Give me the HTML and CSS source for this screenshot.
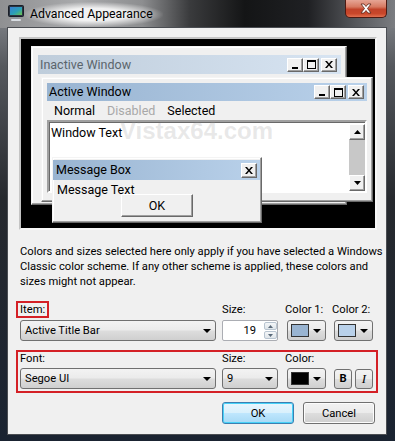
FILE: index.html
```html
<!DOCTYPE html>
<html lang="en">
<head>
    <meta charset="UTF-8">
    <title>Advanced Appearance</title>
    <link rel="stylesheet" href="styles.css">
</head>
<body>
<div class="dlg">
    <div class="titlebar">
        <svg class="appicon" width="16" height="16" viewBox="0 0 16 16">
            <defs>
                <linearGradient id="scr" x1="0" y1="0" x2="1" y2="1">
                    <stop offset="0" stop-color="#3a7fd0"/>
                    <stop offset="0.55" stop-color="#2aa0b8"/>
                    <stop offset="1" stop-color="#6cc24a"/>
                </linearGradient>
            </defs>
            <rect x="0.5" y="0.5" width="15" height="11" rx="1" fill="#2b3442" stroke="#1a1f28"/>
            <rect x="2" y="2" width="12" height="8" fill="url(#scr)"/>
            <rect x="6" y="12" width="4" height="2" fill="#8c96a0"/>
            <rect x="3" y="14" width="10" height="2" rx="1" fill="#d8dde2"/>
        </svg>
        <span class="title">Advanced Appearance</span>
        <div class="closebtn">
            <svg width="12" height="11" viewBox="0 0 12 11">
                <path d="M1 1h3l2 2.5 2-2.5h3l-3.5 4.5 3.5 4.5h-3l-2-2.5-2 2.5h-3l3.5-4.5z" fill="#fff" stroke="#5a2418" stroke-width="0.8"/>
            </svg>
        </div>
    </div>
    <div class="frame">
        <div class="client">
            <div class="preview">
                <div class="win inactive">
                    <div class="cap">
                        <span>Inactive Window</span>
                        <div class="cbtns">
                            <div class="cb"><svg width="8" height="8"><rect x="1" y="6" width="6" height="2"/></svg></div>
                            <div class="cb"><svg width="9" height="9"><path d="M0 0h9v9h-9z M1 2v6h7v-6z" fill-rule="evenodd"/></svg></div>
                            <div class="cb cl"><svg width="8" height="7"><path d="M0 0h2l2 2.5 2-2.5h2l-3 3.5 3 3.5h-2l-2-2.5-2 2.5h-2l3-3.5z"/></svg></div>
                        </div>
                    </div>
                </div>
                <div class="win active">
                    <div class="cap">
                        <span>Active Window</span>
                        <div class="cbtns">
                            <div class="cb"><svg width="8" height="8"><rect x="1" y="6" width="6" height="2"/></svg></div>
                            <div class="cb"><svg width="9" height="9"><path d="M0 0h9v9h-9z M1 2v6h7v-6z" fill-rule="evenodd"/></svg></div>
                            <div class="cb cl"><svg width="8" height="7"><path d="M0 0h2l2 2.5 2-2.5h2l-3 3.5 3 3.5h-2l-2-2.5-2 2.5h-2l3-3.5z"/></svg></div>
                        </div>
                    </div>
                    <div class="menu">
                        <span>Normal</span>
                        <span class="dis">Disabled</span>
                        <span>Selected</span>
                    </div>
                    <div class="textbox">
                        <span class="wtext">Window Text</span>
                        <div class="sbar">
                            <div class="sb"><svg width="7" height="4"><path d="M3.5 0l3.5 4h-7z"/></svg></div>
                            <div class="track"></div>
                            <div class="sb"><svg width="7" height="4"><path d="M0 0h7l-3.5 4z"/></svg></div>
                        </div>
                    </div>
                </div>
                <div class="win msgbox">
                    <div class="cap">
                        <span>Message Box</span>
                        <div class="cb cl big"><svg width="8" height="7"><path d="M0 0h2l2 2.5 2-2.5h2l-3 3.5 3 3.5h-2l-2-2.5-2 2.5h-2l3-3.5z"/></svg></div>
                    </div>
                    <div class="msgtext">Message Text</div>
                    <div class="okmini">OK</div>
                </div>
                <div class="watermark">Vistax64.com</div>
            </div>

            <p class="note">Colors and sizes selected here only apply if you have selected a Windows<br>Classic color scheme. If any other scheme is applied, these colors and<br>sizes might not appear.</p>

            <div class="grid itemrow">
                <span class="lbl boxed">Item:</span>
                <span class="lbl">Size:</span>
                <span class="lbl clbl">Color 1:</span>
                <span class="lbl clbl">Color 2:</span>

                <div class="combo wide">Active Title Bar<i class="arr"></i></div>
                <div class="spin">
                    <span class="spinval">19</span>
                    <div class="spinbtns">
                        <div><svg width="5" height="3"><path d="M2.5 0l2.5 3h-5z"/></svg></div>
                        <div><svg width="5" height="3"><path d="M0 0h5l-2.5 3z"/></svg></div>
                    </div>
                </div>
                <div class="colorbtn"><span class="sw c1"></span><i class="arr"></i></div>
                <div class="colorbtn"><span class="sw c2"></span><i class="arr"></i></div>
            </div>

            <div class="grid fontrow">
                <span class="lbl">Font:</span>
                <span class="lbl">Size:</span>
                <span class="lbl clbl">Color:</span>
                <span></span>

                <div class="combo wide">Segoe UI<i class="arr"></i></div>
                <div class="combo small">9<i class="arr"></i></div>
                <div class="colorbtn"><span class="sw c3"></span><i class="arr"></i></div>
                <div class="bi">
                    <div class="tbtn bold">B</div>
                    <div class="tbtn ital">I</div>
                </div>
            </div>

            <div class="actions">
                <div class="btn def">OK</div>
                <div class="btn">Cancel</div>
            </div>
        </div>
    </div>
</div>
</body>
</html>
```

FILE: styles.css
```css
body{
    margin: 0;
    background: #1c2430;
    font-family: Roboto, "Noto Sans", sans-serif;
    font-size: 11.2px;
    color: #000;
}
.dlg{
    width: 395px;
    height: 441px;
    display: flex;
    flex-direction: column;
    background: linear-gradient(180deg, #8d9095 0%, #55585d 15%, #26292e 45%, #1a2331 100%);
}

/* title bar */
.titlebar{
    height: 28px;
    display: flex;
    align-items: flex-start;
    background: linear-gradient(90deg, #8f9092 0%, #a9aaac 20%, #8d8e90 36%, #3a3b3d 48%, #141516 62%, #1f2023 78%, #55575b 90%, #7b7d81 100%);
}
.appicon{
    margin: 5px 0 0 8px;
}
.title{
    margin: 2px 0 0 0;
    padding: 5px 10px 6px 6px;
    line-height: 14px;
    font-size: 12.3px;
    color: #000;
    background: radial-gradient(ellipse at center, rgba(255,255,255,0.85) 35%, rgba(255,255,255,0) 72%);
}
.closebtn{
    margin-left: auto;
    margin-right: 8px;
    width: 42px;
    height: 18px;
    box-sizing: border-box;
    border: 1px solid #4d1a12;
    border-top: none;
    border-radius: 0 0 5px 5px;
    background: linear-gradient(180deg, #e6a595 0%, #d77a62 40%, #c2432a 55%, #c9472a 80%, #e27050 100%);
    display: flex;
    align-items: center;
    justify-content: center;
}

/* frame + client */
.frame{
    flex: 1;
    display: flex;
    padding: 0 9px 7px 8px;
}
.client{
    flex: 1;
    background: #f0f0f0;
    box-shadow: 0 0 0 1px #4a4d52;
    display: flex;
    flex-direction: column;
}

/* preview */
.preview{
    position: relative;
    margin: 9px 0 0 11px;
    width: 358px;
    height: 193px;
    box-sizing: border-box;
    border: 2px solid;
    border-color: #c4c4c4 #f8f8f8 #f8f8f8 #c4c4c4;
    background: #000;
    overflow: hidden;
    font-size: 12.5px;
}
.win{
    position: absolute;
    box-sizing: border-box;
    background: #f0f0f0;
    border: 1px solid;
    border-color: #f4f4f4 #696969 #696969 #f4f4f4;
    box-shadow: inset -1px -1px 0 #a0a0a0, inset 1px 1px 0 #fff;
    display: flex;
    flex-direction: column;
}
.cap{
    display: flex;
    align-items: center;
    padding-left: 2px;
    line-height: 16px;
}
.cbtns{
    margin-left: auto;
    display: flex;
}
.cb{
    width: 16px;
    height: 14px;
    box-sizing: border-box;
    background: #f0f0f0;
    border: 1px solid;
    border-color: #fff #696969 #696969 #fff;
    box-shadow: inset -1px -1px 0 #a0a0a0;
    display: flex;
    align-items: center;
    justify-content: center;
}
.cb.cl{
    margin-left: 2px;
}
.inactive{
    left: 10px;
    top: 7px;
    width: 316px;
    height: 159px;
    padding: 8px 5px 0 6px;
}
.inactive .cap{
    height: 19px;
    color: #5b656c;
    background: linear-gradient(90deg, #bfcddb, #d7e4f2);
    padding-right: 4px;
}
.active{
    left: 20px;
    top: 38px;
    width: 332px;
    height: 125px;
    padding: 5px 5px 0 5px;
}
.active .cap, .msgbox .cap{
    height: 18px;
    background: linear-gradient(90deg, #99b4d1, #b9d1ea);
    padding-right: 3px;
}
.menu{
    display: flex;
    height: 19px;
    align-items: center;
    padding-left: 1px;
}
.menu span{
    padding: 0 6px;
}
.menu .dis{
    color: #a8a8a8;
}
.textbox{
    height: 73px;
    box-sizing: border-box;
    background: #fff;
    border: 2px solid;
    border-color: #a0a0a0 #fff #fff #a0a0a0;
    box-shadow: inset 1px 1px 0 #696969;
    display: flex;
}
.wtext{
    padding: 3px 0 0 2px;
    line-height: 16px;
}
.sbar{
    margin: 2px 0 0 auto;
    width: 16px;
    display: flex;
    flex-direction: column;
}
.sb{
    width: 16px;
    height: 16px;
    box-sizing: border-box;
    background: #f0f0f0;
    border: 1px solid;
    border-color: #fff #696969 #696969 #fff;
    box-shadow: inset -1px -1px 0 #a0a0a0;
    display: flex;
    align-items: center;
    justify-content: center;
}
.track{
    flex: 1;
    background: #c8c8c8;
}
.msgbox{
    left: 31px;
    top: 118px;
    width: 210px;
    height: 66px;
    padding: 2px 1px 5px 0;
    z-index: 2;
}
.msgbox .cap{
    height: 20px;
    padding-left: 3px;
}
.cb.big{
    margin-left: auto;
    width: 16px;
    height: 15px;
}
.msgtext{
    padding: 2px 0 0 4px;
    line-height: 16px;
}
.okmini{
    margin: -4px 0 0 68px;
    width: 72px;
    height: 23px;
    box-sizing: border-box;
    border: 1px solid;
    border-color: #fff #696969 #696969 #fff;
    box-shadow: inset -1px -1px 0 #a0a0a0;
    display: flex;
    align-items: center;
    justify-content: center;
}
.watermark{
    position: absolute;
    left: 99px;
    top: 78px;
    font-family: "Liberation Sans", sans-serif;
    font-weight: bold;
    font-size: 24px;
    color: rgba(150, 150, 150, 0.22);
    z-index: 3;
}

/* note */
.note{
    margin: 14px 0 0 12px;
    line-height: 15px;
    white-space: nowrap;
}

/* property rows */
.grid{
    display: grid;
    grid-template-columns: 202px 65px 47px 39px;
    row-gap: 2px;
    align-items: center;
}
.itemrow{
    margin: 12px 0 0 12px;
}
.lbl{
    line-height: 13px;
    white-space: nowrap;
}
.boxed{
    justify-self: start;
    margin-left: -4px;
    padding: 0 2px;
    border: 2px solid #d42026;
}
.clbl{
    margin-left: -2px;
}
.fontrow{
    margin: 9px 0 0 8px;
    width: 362px;
    box-sizing: border-box;
    border: 2px solid #d42026;
    padding: 0 0 2px 2px;
}
.fontrow .lbl{
    line-height: 14px;
}
.combo{
    position: relative;
    height: 21px;
    box-sizing: border-box;
    border: 1px solid #707070;
    border-radius: 3px;
    background: linear-gradient(180deg, #f3f3f3 0%, #ebebeb 48%, #dddddd 52%, #cfcfcf 100%);
    padding-left: 4px;
    line-height: 19px;
}
.combo.wide{
    width: 196px;
}
.combo.small{
    width: 56px;
}
.arr{
    position: absolute;
    right: 4px;
    top: 8px;
    width: 0;
    height: 0;
    border-left: 4px solid transparent;
    border-right: 4px solid transparent;
    border-top: 4px solid #000;
}
.spin{
    width: 56px;
    height: 21px;
    box-sizing: border-box;
    border: 1px solid #abadb3;
    border-radius: 2px;
    background: #fff;
    display: flex;
}
.spinval{
    flex: 1;
    text-align: right;
    padding-right: 8px;
    line-height: 19px;
}
.spinbtns{
    width: 13px;
    display: flex;
    flex-direction: column;
    gap: 1px;
    padding: 1px 0;
}
.spinbtns div{
    flex: 1;
    border: 1px solid #b8c4d0;
    border-radius: 2px;
    background: linear-gradient(180deg, #f4f6f8, #dfe5ea);
    display: flex;
    align-items: center;
    justify-content: center;
}
.spinbtns svg path{
    fill: #5a6a7a;
}
.colorbtn{
    position: relative;
    width: 39px;
    height: 21px;
    box-sizing: border-box;
    border: 1px solid #707070;
    border-radius: 3px;
    background: linear-gradient(180deg, #f3f3f3 0%, #ebebeb 48%, #dddddd 52%, #cfcfcf 100%);
}
.colorbtn .arr{
    right: 4px;
}
.sw{
    position: absolute;
    left: 3px;
    top: 3px;
    width: 18px;
    height: 13px;
    box-sizing: border-box;
    border: 1px solid #333;
}
.c1{
    background: #99b4d1;
}
.c2{
    background: #b9d1ea;
}
.c3{
    background: #000;
}
.bi{
    display: flex;
    gap: 3px;
}
.tbtn{
    width: 18px;
    height: 20px;
    box-sizing: border-box;
    border: 1px solid #707070;
    border-radius: 3px;
    background: linear-gradient(180deg, #f3f3f3 0%, #ebebeb 48%, #dddddd 52%, #cfcfcf 100%);
    display: flex;
    align-items: center;
    justify-content: center;
}
.bold{
    font-weight: bold;
}
.ital{
    font-family: "Liberation Serif", serif;
    font-style: italic;
    font-size: 13px;
}

/* bottom buttons */
.actions{
    display: flex;
    justify-content: flex-end;
    gap: 9px;
    margin-top: 9px;
    padding-right: 11px;
}
.btn{
    width: 72px;
    height: 22px;
    box-sizing: border-box;
    border: 1px solid #707070;
    border-radius: 3px;
    background: linear-gradient(180deg, #f2f2f2 0%, #ebebeb 48%, #dddddd 52%, #cfcfcf 100%);
    box-shadow: inset 0 0 0 1px #fcfcfc;
    display: flex;
    align-items: center;
    justify-content: center;
}
.btn.def{
    border-color: #3c7fb1;
    background: linear-gradient(180deg, #eaf6fd 0%, #d9f0fc 48%, #bee6fd 52%, #a7d9f5 100%);
    box-shadow: inset 0 0 0 1px #48d2f8;
}
```
